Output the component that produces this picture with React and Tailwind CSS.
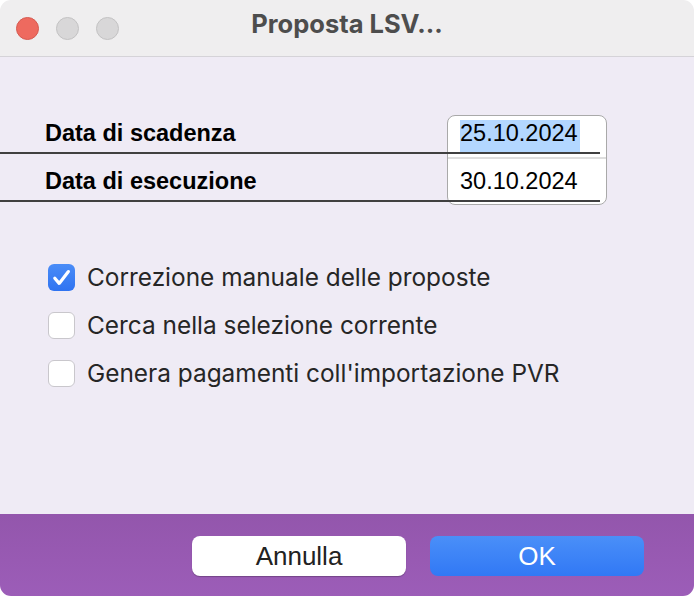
import React from "react";

const sysFont = { fontFamily: "Inter, 'Noto Sans', sans-serif" };
const helv = { fontFamily: "'Liberation Sans', Arial, sans-serif" };

function Checkbox({ checked }) {
  if (checked) {
    return (
      <div className="w-[27px] h-[27px] rounded-[6px] bg-gradient-to-b from-[#4a8cf7] to-[#2f73f1] flex items-center justify-center shrink-0">
        <svg width="27" height="27" viewBox="0 0 27 27">
          <path d="M6.8 14.2 L11.2 19.4 L20.4 7.6" fill="none" stroke="white" strokeWidth="3.2" strokeLinecap="round" strokeLinejoin="round" />
        </svg>
      </div>
    );
  }
  return <div className="w-[27px] h-[27px] rounded-[6px] bg-white border border-[#c9c7cc] shrink-0" />;
}

export default function App() {
  return (
    <div className="w-[694px] h-[596px] bg-white">
      <div className="w-full h-full rounded-[11px] overflow-hidden flex flex-col">
        {/* Title bar */}
        <div className="h-[57px] bg-[#efeeef] border-b border-[#d5d3d8] flex items-center relative shrink-0">
          <div className="flex gap-[17px] pl-[16px]">
            <div className="w-[23px] h-[23px] rounded-full bg-[#ee6a5f] border border-[#d65a50]" />
            <div className="w-[23px] h-[23px] rounded-full bg-[#d8d7d8] border border-[#c3c2c3]" />
            <div className="w-[23px] h-[23px] rounded-full bg-[#d8d7d8] border border-[#c3c2c3]" />
          </div>
          <div className="absolute left-0 right-0 top-0 h-[49px] flex items-center justify-center pointer-events-none">
            <span className="text-[25.5px] font-bold text-[#4d4d4d]" style={sysFont}>Proposta LSV...</span>
          </div>
        </div>

        {/* Content */}
        <div className="flex-1 bg-[#efebf5] flex flex-col">
          <div className="relative mt-[49px]" style={helv}>
            <div className="absolute left-[447px] top-[9px] w-[160px] h-[90px] bg-white border-[1.5px] border-[#a9a9a9] rounded-[8px]">
              <div className="absolute left-0 right-0 top-[41px] h-[1.5px] bg-[#dedede]" />
            </div>
            <div className="relative w-[600px] h-[48px] border-b-2 border-[#404040] pt-[14px] flex">
              <span className="pl-[45px] w-[460px] font-bold text-[23.5px] leading-[26px] text-black">Data di scadenza</span>
              <span className="text-[23.5px] leading-[26px] text-black bg-[#b3d7ff] pr-[2px]">25.10.2024</span>
            </div>
            <div className="relative w-[600px] h-[48px] border-b-2 border-[#404040] pt-[14px] flex">
              <span className="pl-[45px] w-[460px] font-bold text-[23.5px] leading-[26px] text-black">Data di esecuzione</span>
              <span className="text-[23.5px] leading-[26px] text-black">30.10.2024</span>
            </div>
          </div>

          <div className="mt-[62px] pl-[48px] flex flex-col gap-[21px]" style={sysFont}>
            {[
              ["Correzione manuale delle proposte", true],
              ["Cerca nella selezione corrente", false],
              ["Genera pagamenti coll'importazione PVR", false],
            ].map(([label, checked]) => (
              <div key={label} className="flex items-center gap-[12px] h-[27px]">
                <Checkbox checked={checked} />
                <span className="text-[24.4px] leading-[27px] text-[#262626]">{label}</span>
              </div>
            ))}
          </div>
        </div>

        {/* Footer */}
        <div className="h-[82px] shrink-0 bg-gradient-to-b from-[#9356ac] to-[#9c5db8] flex justify-end items-start pt-[22px] pr-[50px] gap-[24px]" style={helv}>
          <button className="w-[214px] h-[40px] rounded-[8px] bg-white text-[#222] text-[26px] leading-[40px] shadow-[0_1px_1px_rgba(0,0,0,0.25)]">Annulla</button>
          <button className="w-[214px] h-[40px] rounded-[8px] bg-gradient-to-b from-[#4a8ff8] to-[#3178f5] text-white text-[26px] leading-[40px]">OK</button>
        </div>
      </div>
    </div>
  );
}
